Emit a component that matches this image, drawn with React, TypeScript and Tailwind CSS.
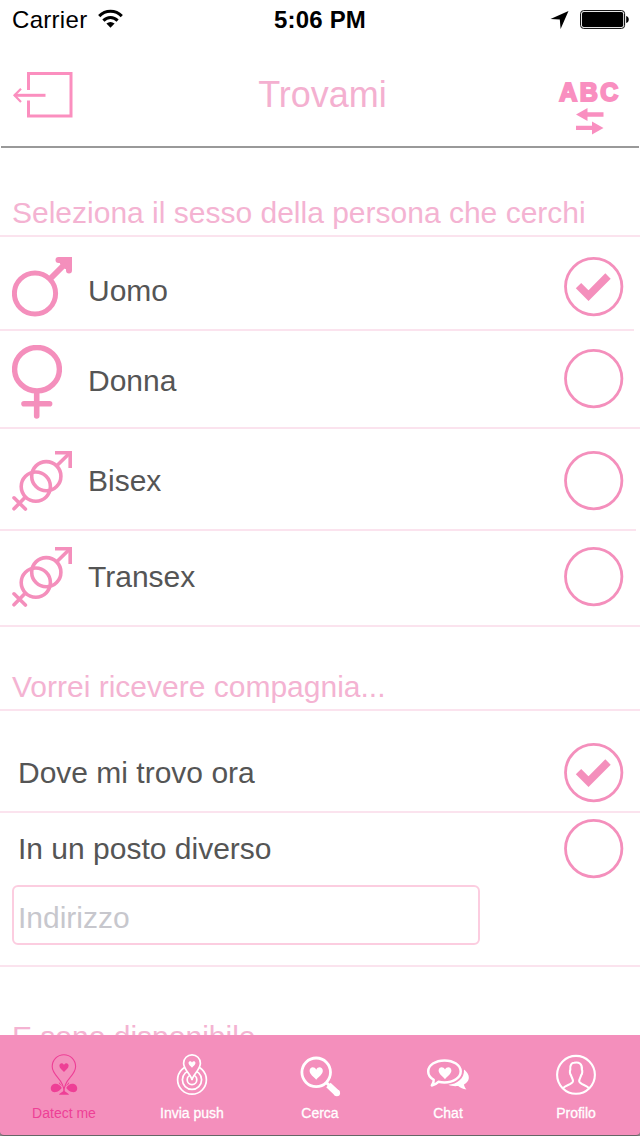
import { useState } from "react";
import clsx from "clsx";

const HEART = "M0 5.6 C-2.2 3.2 -5.8 0.8 -5.8 -2.2 C-5.8 -5.6 -1.6 -6.4 0 -3.2 C1.6 -6.4 5.8 -5.6 5.8 -2.2 C5.8 0.8 2.2 3.2 0 5.6Z";

const MaleIcon = () => (
  <svg width="60" height="60" viewBox="0 0 60 60" fill="none" stroke="#f48fbc">
    <circle cx="23" cy="36.5" r="20.6" strokeWidth="5" />
    <path d="M38.5 21.5 L55 5" strokeWidth="6" />
    <path d="M46.5 3 H57 V13.5" strokeWidth="6" strokeLinecap="round" />
    <path d="M47 0 H60 V13 L53 12 L48 7Z" fill="#f48fbc" stroke="none" />
  </svg>
);

const FemaleIcon = () => (
  <svg width="50" height="74" viewBox="0 0 50 74" fill="none" stroke="#f48fbc">
    <ellipse cx="25" cy="24.2" rx="22.4" ry="21.7" strokeWidth="5.4" />
    <path d="M24.7 47 V71 M12 58.7 H37.6" strokeWidth="5.6" strokeLinecap="round" />
  </svg>
);

const MixedIcon = () => (
  <svg width="60" height="60" viewBox="0 0 60 60" fill="none" stroke="#f48fbc" strokeWidth="3.6">
    <circle cx="34.3" cy="25.2" r="14.6" />
    <circle cx="23.8" cy="35.6" r="14.6" />
    <path d="M45 14.5 L57.5 2.2 M13.2 46.2 L2 57.8 M2 46.8 L13.4 58" strokeLinecap="round" />
    <path d="M43 1.8 H58.2 V17" />
  </svg>
);

const DatectIcon = () => (
  <svg width="44" height="44" viewBox="0 0 44 44" fill="none" stroke="#ee3f96" strokeWidth="1.1">
    <path d="M22 38 C21.8 32.5 19.2 28.5 15.8 24.6 C12.4 20.8 10.2 17.6 10.2 13.6 A11.7 11.9 0 0 1 33.6 13.6 C33.6 17.6 31.4 20.8 28 24.6 C24.6 28.5 22.2 32.5 22 38Z" />
    <path d={HEART} transform="translate(22 14.4) scale(.8)" fill="#ee3f96" stroke="none" />
    <g fill="#ee3f96" stroke="none">
      <path d="M19.8 35 C18.4 32 15.4 30.2 12.6 30.8 C9.8 31.6 8.5 33.8 8.8 36 C9.2 38.6 11.6 39.6 14 39.1 C16.6 38.6 18.4 36.8 19.8 35Z" />
      <path d="M24.2 35 C25.6 32 28.6 30.2 31.4 30.8 C34.2 31.6 35.5 33.8 35.2 36 C34.8 38.6 32.4 39.6 30 39.1 C27.4 38.6 25.6 36.8 24.2 35Z" />
      <path d="M17 41.8 C17.8 39.6 20.8 39.6 22 37 C23.2 39.6 26.2 39.6 27 41.8Z" />
      <path d="M16.8 29 L20.8 33.6 L17.2 31Z M27.2 29 L23.2 33.6 L26.8 31Z" />
    </g>
  </svg>
);

const PushIcon = () => (
  <svg width="44" height="44" viewBox="0 0 44 44" fill="none" stroke="#fff" strokeWidth="1.7">
    <circle cx="22" cy="26.8" r="14.4" />
    <circle cx="22" cy="26.8" r="9.6" />
    <circle cx="22" cy="26.8" r="4.8" />
    <path
      d="M22 27 C21 21.5 13.6 16.5 13.6 10.2 A8.4 8.4 0 0 1 30.4 10.2 C30.4 16.5 23 21.5 22 27Z"
      fill="#f48fbc"
    />
    <path d={HEART} transform="translate(22 11.4) scale(.6)" fill="#fff" stroke="none" />
  </svg>
);

const SearchIcon = () => (
  <svg width="44" height="44" viewBox="0 0 44 44" fill="none" stroke="#fff">
    <circle cx="18.2" cy="19.3" r="14.3" strokeWidth="2.8" />
    <path d="M28 29.2 L31.2 32.4" strokeWidth="3" />
    <path d="M30.4 32 L38.8 39.8" strokeWidth="6.4" />
    <circle cx="38.9" cy="40" r="3.2" fill="#fff" stroke="none" />
    <path d={HEART} transform="translate(18.2 20.3) scale(1.14)" fill="#fff" stroke="none" />
  </svg>
);

const ChatIcon = () => (
  <svg width="44" height="44" viewBox="0 0 44 44" fill="none" stroke="#fff">
    <path
      d="M18.5 7.4 C27.5 7.4 34.7 12.2 34.7 18.4 C34.7 24.6 27.5 29.4 18.5 29.4 C16.2 29.4 14.3 29.2 12.4 28.8 C10.6 30.6 8.6 31.9 5.8 32.4 C7.2 30.6 7.9 29 7.7 26.8 C4.3 24.7 2.2 21.8 2.2 18.4 C2.2 12.2 9.5 7.4 18.5 7.4Z"
      strokeWidth="2.5"
      strokeLinejoin="round"
    />
    <path
      d="M38 16.5 C40.6 18.6 43.2 21.6 42.8 25.2 C42.5 28 40.7 29.9 38 31.4 C38.2 33.1 39 34.8 40.4 36.4 C37 36 34.4 35 32.2 33.1 C28.4 33.5 25.2 33.1 22.4 31.8 C31 31 38.6 25.8 38 16.5Z"
      fill="#fff"
      stroke="none"
    />
    <path d={HEART} transform="translate(19 20) scale(1.1)" fill="#fff" stroke="none" />
  </svg>
);

const ProfileIcon = () => (
  <svg width="44" height="44" viewBox="0 0 44 44" fill="none" stroke="#fff" strokeWidth="2.1">
    <circle cx="22" cy="21.8" r="18.9" />
    <path d="M9 35.3 C11 32 19 31.5 19 28 C19 26 17.6 24.8 16.9 22 C15.8 21 15.6 17.5 16.3 16.8 C15.6 11.5 18 9.7 20.2 9.8 C24.5 8.6 28.6 10.6 27.9 16.8 C28.6 17.5 28.3 21 27.2 22 C26.6 24.8 25.2 26 25.2 28 C25.2 31.5 33 32 35 35.3" />
  </svg>
);

const sexes = [
  { name: "Uomo", Icon: MaleIcon, row: "h-[94px]", line: "w-[634px]", icon: "mt-5", text: "mt-9", radio: "mt-5" },
  { name: "Donna", Icon: FemaleIcon, row: "h-[98px]", line: "w-full", icon: "mt-3.5", text: "mt-8", radio: "mt-[18px]" },
  { name: "Bisex", Icon: MixedIcon, row: "h-[102px]", line: "w-[636px]", icon: "mt-[22px]", text: "mt-[34px]", radio: "mt-[22px]" },
  { name: "Transex", Icon: MixedIcon, row: "h-24", line: "w-full", icon: "mt-4", text: "mt-7", radio: "mt-4" },
];

const tabs = [
  { name: "Datect me", Icon: DatectIcon, active: true },
  { name: "Invia push", Icon: PushIcon },
  { name: "Cerca", Icon: SearchIcon },
  { name: "Chat", Icon: ChatIcon },
  { name: "Profilo", Icon: ProfileIcon },
];

const Radio = ({ checked, onClick, className }: { checked: boolean; onClick: () => void; className: string }) => (
  <button
    onClick={onClick}
    className={clsx("ml-auto mr-4 h-[60px] w-[60px] shrink-0", className)}
  >
    <svg width="60" height="60" viewBox="0 0 60 60" fill="none" stroke="#f48fbc">
      <circle cx="29.7" cy="29.6" r="28.2" strokeWidth="2.8" />
      {checked && <path d="M14.5 28.6 L24.5 38.6 L44 19" strokeWidth="7.6" />}
    </svg>
  </button>
);

const App = () => {
  const [sex, setSex] = useState("Uomo");
  const [here, setHere] = useState(true);

  return (
    <div className="flex h-[1136px] w-[640px] flex-col overflow-hidden bg-white font-['Liberation_Sans',Arial,sans-serif] text-[30px] leading-9 text-[#555]">
      {/* status bar */}
      <div className="grid h-10 shrink-0 grid-cols-3 text-2xl leading-[40px] text-black">
        <div className="flex pl-3">
          <span className="tracking-[0.3px]">Carrier</span>
          <svg className="ml-[11px] mt-[9px]" width="25" height="20" viewBox="0 0 25 20" fill="none" stroke="#000" strokeWidth="3">
            <path d="M1.2 7.1 C7.5 0.6 17.5 0.6 23.8 7.1" />
            <path d="M5.4 11.6 C9.4 7.5 15.6 7.5 19.6 11.6" />
            <path d="M8.4 14.4 C11 12.4 14 12.4 16.6 14.4 L12.5 18.7Z" fill="#000" stroke="none" />
          </svg>
        </div>
        <span className="text-center font-bold tracking-[0.2px]">5:06 PM</span>
        <div className="flex justify-end pr-[10px]">
          <svg className="mt-[10px]" width="80" height="20" viewBox="0 0 80 20">
            <path d="M18.5 1 L0.5 9 L9.8 9.6 L10.6 19Z" />
            <rect x="30.6" y="0.6" width="44" height="17.8" rx="3" fill="none" stroke="#000" strokeWidth="1" />
            <rect x="32" y="2" width="41.2" height="15" rx="1.8" />
            <path d="M76.2 6 C79.6 6.5 79.6 12.5 76.2 13Z" />
          </svg>
        </div>
      </div>

      {/* header */}
      <div className="mx-px grid h-[108px] shrink-0 grid-cols-[1fr_auto_1fr] border-b-2 border-[#999] pl-[11px]">
        <svg className="mt-[31px]" width="62" height="48" viewBox="0 0 62 48" fill="none" stroke="#fb8fbf" strokeWidth="3">
          <path d="M16.5 19 V2.5 H59 V45 H16.5 V29.5" />
          <path d="M2.5 24.3 H33.5" />
          <path d="M9 17.7 L2.5 24.3 L9 31" strokeWidth="2.2" />
        </svg>
        <h1 className="mt-[33px] -translate-x-[3px] text-[36px] leading-[44px] text-[#f4b0d0]">Trovami</h1>
        <div className="mr-[17px] mt-[37px] flex w-[64px] flex-col items-center justify-self-end text-[#f98fc0]">
          <span className="text-[25px] font-bold leading-[30px] tracking-[2.4px] [-webkit-text-stroke:2px_#f98fc0]">ABC</span>
          <svg width="28" height="28" viewBox="0 0 28 28" fill="currentColor">
            <path d="M0 7.5 L11.5 1 V5.3 H27.5 V9.7 H11.5 V14Z M27.5 21 L16 14.5 V18.7 H0 V23.1 H16 V27.5Z" />
          </svg>
        </div>
      </div>

      <div className="min-h-0 grow overflow-hidden">
        <h2 className="h-[89px] border-b-2 border-[#fbe3ee] pl-3 pt-[47px] text-[#f4b3d2]">
          Seleziona il sesso della persona che cerchi
        </h2>
        {sexes.map(({ name, Icon, row, line, icon, text, radio }) => (
          <div key={name} className={clsx("flex flex-col", row)}>
            <div className="flex grow pl-3">
              <div className={clsx("w-[76px]", icon)}>
                <Icon />
              </div>
              <span className={text}>{name}</span>
              <Radio checked={sex === name} onClick={() => setSex(name)} className={radio} />
            </div>
            <div className={clsx("h-0.5 shrink-0 bg-[#fbe3ee]", line)} />
          </div>
        ))}

        <h2 className="h-[84px] border-b-2 border-[#fbe3ee] pl-3 pt-[42px] text-[#f4b3d2]">
          Vorrei ricevere compagnia...
        </h2>
        <div className="flex h-[102px] border-b-2 border-[#fbe3ee] pl-[18px]">
          <span className="mt-11">Dove mi trovo ora</span>
          <Radio checked={here} onClick={() => setHere(true)} className="mt-8" />
        </div>
        <div className="h-[154px] border-b-2 border-[#fbe3ee]">
          <div className="flex h-[72px] pl-[18px]">
            <span className="mt-[18px]">In un posto diverso</span>
            <Radio checked={!here} onClick={() => setHere(false)} className="mt-1.5" />
          </div>
          <input
            placeholder="Indirizzo"
            className="ml-3 block h-[60px] w-[468px] rounded-md border-2 border-[#fccde0] pl-1 pt-1.5 outline-none placeholder:text-[#c7c7cd]"
          />
        </div>
        <h2 className="pl-3 pt-[52px] text-[#f4b3d2]">E sono disponibile</h2>
      </div>

      {/* tab bar */}
      <div className="h-[101px] shrink-0 bg-[#888]">
        <div className="grid h-full grid-cols-5 rounded-b-[4px] border-b border-[#666] bg-[#f48fbc]">
          {tabs.map(({ name, Icon, active }) => (
            <div
              key={name}
              className={clsx(
                "flex flex-col items-center pt-[18px] text-sm leading-4",
                active ? "text-[#ee3f96]" : "text-white [-webkit-text-stroke:0.3px_#fff]"
              )}
            >
              <Icon />
              <span className="mt-2">{name}</span>
            </div>
          ))}
        </div>
      </div>
    </div>
  );
};

export default App;
